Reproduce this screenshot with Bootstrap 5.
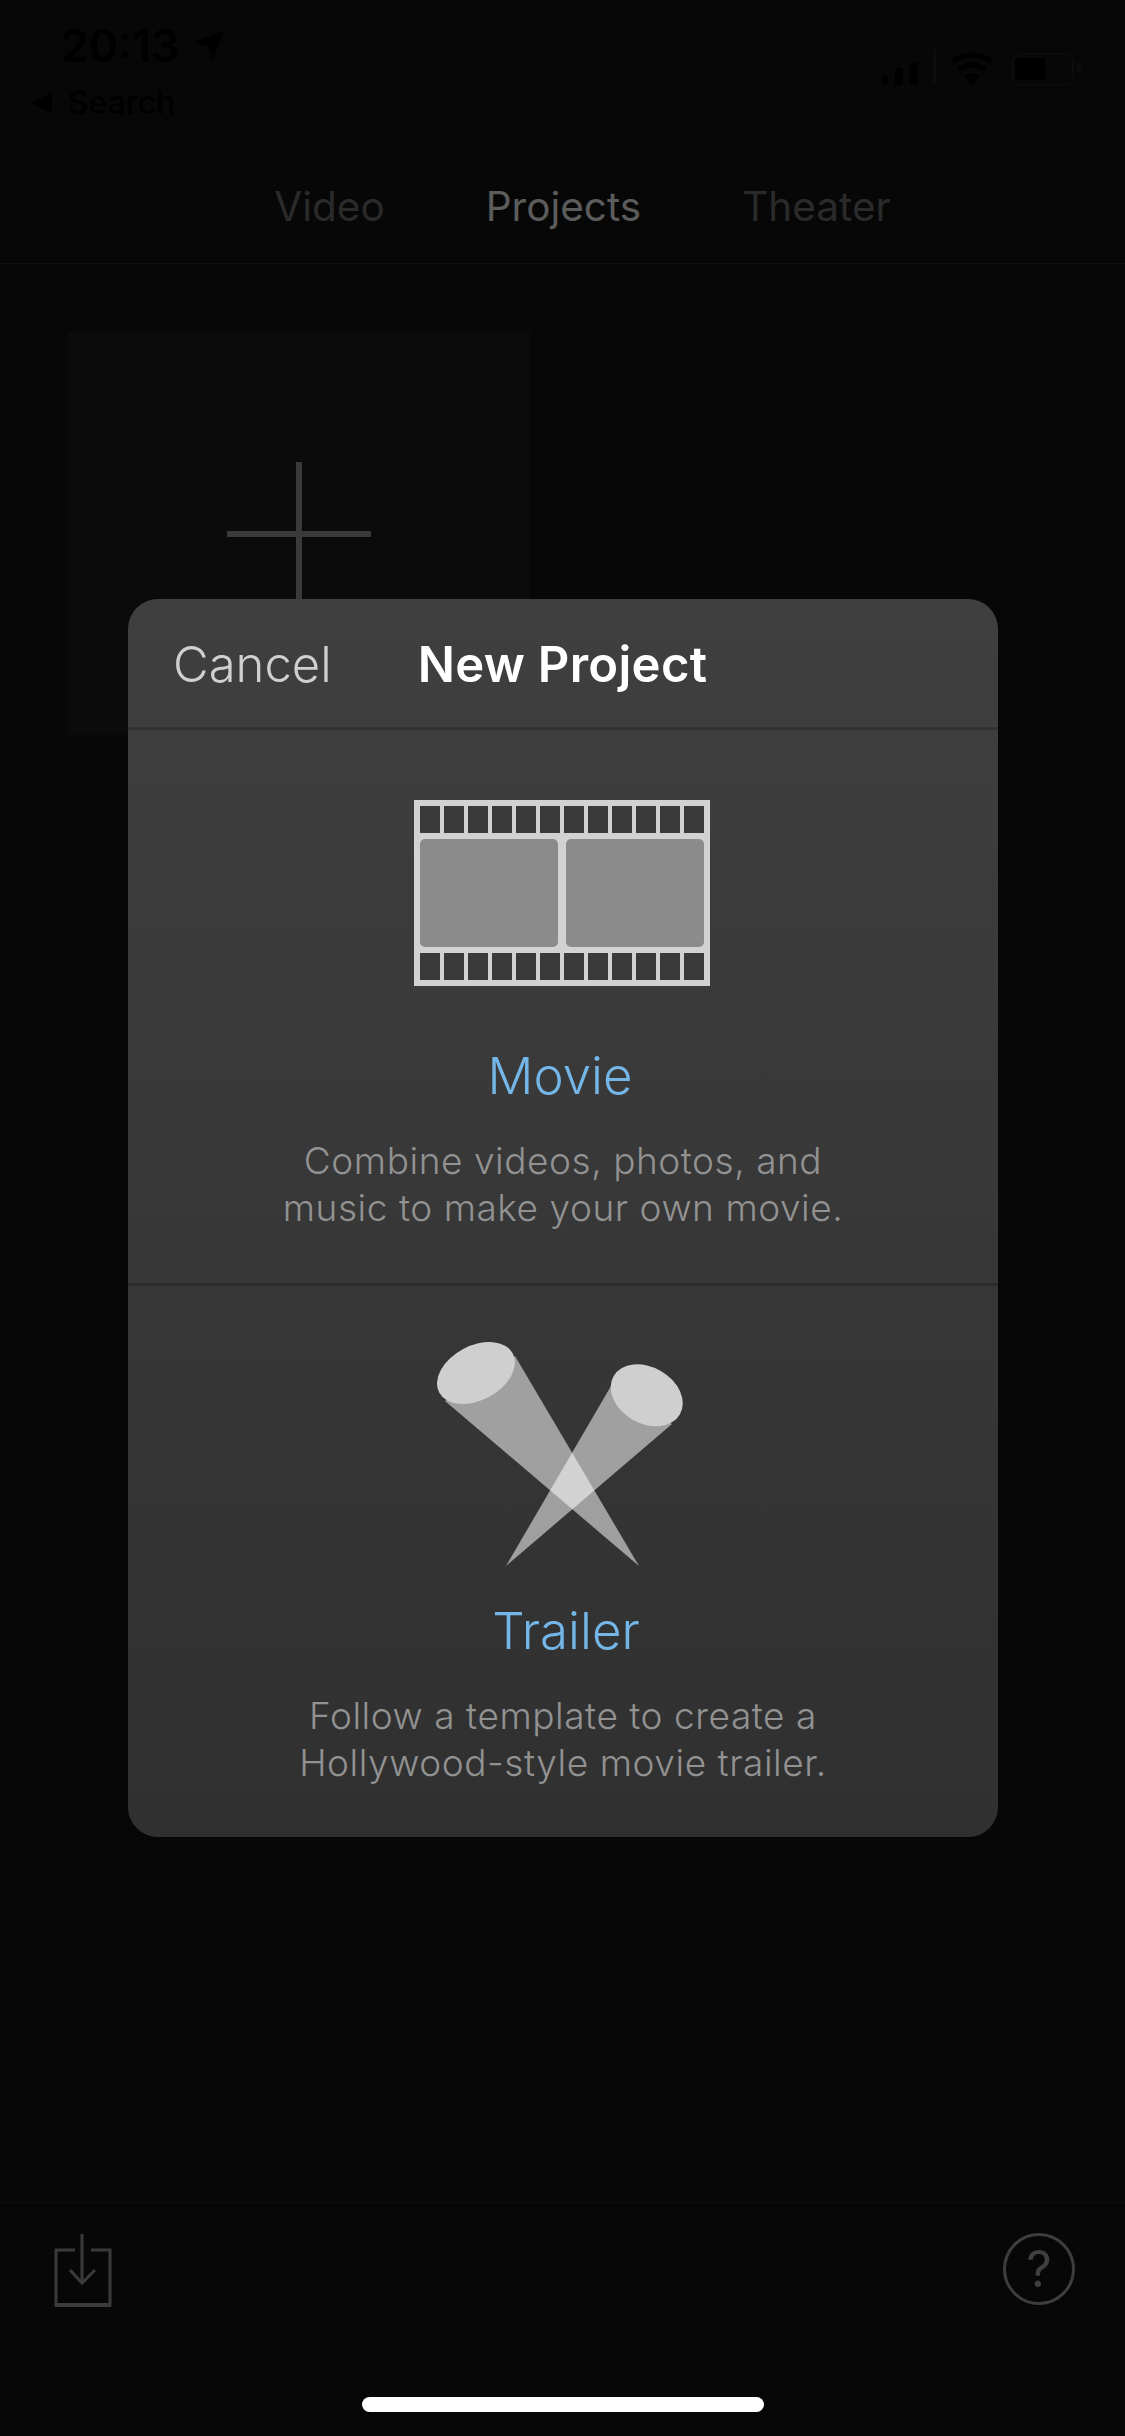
<!DOCTYPE html>
<html lang="en">
<head>
<meta charset="utf-8">
<title>New Project</title>
<link href="https://cdn.jsdelivr.net/npm/bootstrap@5.3.0/dist/css/bootstrap.min.css" rel="stylesheet">
<style>
html,body{margin:0;background:#070707}
body{width:1125px;height:2436px;overflow:hidden;font-family:Inter,"Liberation Sans",sans-serif;position:relative}
.app-screen{height:2436px}
.status-row{height:84px;padding:24px 43px 0 61px}
.clock{font-size:44.5px;font-weight:600;color:#000;line-height:1;margin-right:5px}
.status-icons{margin-top:22px}
.back-row{height:38px;padding-left:30px;color:#000;font-size:32px;font-weight:500;line-height:1}
.tabs-row{height:142px;padding:30px 0 0 40px;gap:101px;border-bottom:1px solid #0f0f0f;font-size:40.5px;line-height:1}
.tab-dim{color:#2a2a2a}
.tab-on{color:#5c5c5c}
.tile{width:462px;height:403px;margin:68px 0 0 68px;background:#0b0b0b}
.tool-row{height:195px;border-top:1px solid #0e0e0e;padding:30px 50px 0 53px}
.help-ring{width:72px;height:72px;border:3px solid #3d3d3d;border-radius:50%;color:#3f3f3f;font-size:50px;font-weight:400;line-height:1}
.home-bar{width:402px;height:15px;margin:0 auto 24px;background:#fff;border-radius:8px}
.dialog{position:absolute;left:128px;top:599px;width:870px;height:1238px;border-radius:30px;background:linear-gradient(#3f3f3f,#303030);overflow:hidden}
.dialog-head{height:131px;padding:3px 0 0 45px;gap:86px;border-bottom:3px solid #323232}
.cancel-txt{font-size:49px;font-weight:300;color:#d0d0d0;line-height:1}
.title-txt{font-size:49px;font-weight:600;color:#fff;line-height:1;letter-spacing:.3px}
.choice{height:555px}
.choice+.choice{border-top:3px solid #2b2b2b}
.film-pic{margin-top:70px;margin-left:-2px}
.cones-pic{margin-top:35px;margin-left:-6px}
.choice-name{font-size:51px;font-weight:300;color:#74b6e8;line-height:1}
.movie-name{margin-top:64px;margin-left:-6px}
.trailer-name{margin-top:24px;margin-left:6px}
.choice-desc{margin-top:36px;font-size:37px;font-weight:300;color:#929292;line-height:47px;text-align:center;letter-spacing:.55px}
</style>
</head>
<body>
<div class="app-screen d-flex flex-column">
  <div class="status-row d-flex align-items-start justify-content-between">
    <div class="d-flex align-items-center gap-2">
      <span class="clock">20:13</span>
      <svg width="34" height="32" viewBox="0 0 34 32"><polygon points="1,12 32,1 21,30 16,16" fill="#000"/></svg>
    </div>
    <svg class="status-icons" width="202" height="44" viewBox="0 0 202 44">
      <rect x="2" y="29" width="6" height="10" rx="2" fill="#000"/>
      <rect x="15" y="22" width="8" height="17" rx="2" fill="#000"/>
      <rect x="30" y="17" width="8" height="22" rx="2" fill="#000"/>
      <rect x="53" y="4" width="3" height="35" fill="#0c0c0c"/>
      <g fill="none" stroke="#000" stroke-width="5">
        <path d="M72.7 16A30 30 0 0 1 111.3 16"/>
        <path d="M79.1 23.7A20 20 0 0 1 104.9 23.7"/>
      </g>
      <polygon points="92,39 84,30 92,27 100,30" fill="#000"/>
      <rect x="133" y="8" width="60" height="31" rx="8" fill="none" stroke="#0c0c0c" stroke-width="2"/>
      <rect x="135" y="12" width="30" height="22" rx="3" fill="#000"/>
      <rect x="197" y="17" width="5" height="9" fill="#0c0c0c"/>
    </svg>
  </div>
  <div class="back-row d-flex align-items-center gap-3">
    <svg width="22" height="20" viewBox="0 0 22 20"><polygon points="0,10 22,0 22,20" fill="#000"/></svg>
    <span>Search</span>
  </div>
  <div class="tabs-row d-flex align-items-center justify-content-center">
    <span class="tab-dim">Video</span>
    <span class="tab-on">Projects</span>
    <span class="tab-dim">Theater</span>
  </div>
  <div class="tile d-flex align-items-center justify-content-center">
    <svg width="144" height="144" viewBox="0 0 144 144"><path d="M72 0V144M0 72H144" stroke="#3a3a3a" stroke-width="6"/></svg>
  </div>
  <div class="flex-grow-1"></div>
  <div class="tool-row d-flex justify-content-between align-items-start">
    <svg width="60" height="76" viewBox="0 0 60 76">
      <g fill="none" stroke="#3a3a3a" stroke-width="3">
        <path d="M22 17H3V72H57V17H38"/>
        <path d="M29 1V50M17 37L29 50L42 37"/>
      </g>
      <path d="M2 72H58" stroke="#3a3a3a" stroke-width="4"/>
    </svg>
    <div class="help-ring d-flex align-items-center justify-content-center">?</div>
  </div>
  <div class="home-bar"></div>
</div>

<div class="dialog d-flex flex-column">
  <div class="dialog-head d-flex align-items-center">
    <span class="cancel-txt">Cancel</span>
    <span class="title-txt">New Project</span>
  </div>
  <div class="choice d-flex flex-column align-items-center">
    <svg class="film-pic d-block" width="296" height="186" viewBox="0 0 296 186">
      <rect width="296" height="186" fill="#d2d2d2"/>
      <g fill="#3a3a3a">
        <rect x="6" y="6" width="20" height="27"/><rect x="30" y="6" width="20" height="27"/><rect x="54" y="6" width="20" height="27"/><rect x="78" y="6" width="20" height="27"/><rect x="102" y="6" width="20" height="27"/><rect x="126" y="6" width="20" height="27"/><rect x="150" y="6" width="20" height="27"/><rect x="174" y="6" width="20" height="27"/><rect x="198" y="6" width="20" height="27"/><rect x="222" y="6" width="20" height="27"/><rect x="246" y="6" width="20" height="27"/><rect x="270" y="6" width="20" height="27"/>
        <rect x="6" y="153" width="20" height="27"/><rect x="30" y="153" width="20" height="27"/><rect x="54" y="153" width="20" height="27"/><rect x="78" y="153" width="20" height="27"/><rect x="102" y="153" width="20" height="27"/><rect x="126" y="153" width="20" height="27"/><rect x="150" y="153" width="20" height="27"/><rect x="174" y="153" width="20" height="27"/><rect x="198" y="153" width="20" height="27"/><rect x="222" y="153" width="20" height="27"/><rect x="246" y="153" width="20" height="27"/><rect x="270" y="153" width="20" height="27"/>
      </g>
      <rect x="6" y="39" width="138" height="108" rx="5" fill="#8b8b8b"/>
      <rect x="152" y="39" width="138" height="108" rx="5" fill="#8b8b8b"/>
    </svg>
    <div class="choice-name movie-name">Movie</div>
    <p class="choice-desc mb-0">Combine videos, photos, and<br>music to make your own movie.</p>
  </div>
  <div class="choice d-flex flex-column align-items-center">
    <svg class="cones-pic d-block" width="320" height="260" viewBox="0 0 320 260">
      <polygon points="115,35 45,80 239,245" fill="#fff" fill-opacity=".53"/>
      <polygon points="211,65 272,103 106,245" fill="#fff" fill-opacity=".53"/>
      <ellipse cx="76" cy="52" rx="41.7" ry="27.2" transform="rotate(-28 76 52)" fill="#cfcfcf"/>
      <ellipse cx="246.7" cy="74.3" rx="38.3" ry="28.2" transform="rotate(30 246.7 74.3)" fill="#cfcfcf"/>
    </svg>
    <div class="choice-name trailer-name">Trailer</div>
    <p class="choice-desc mb-0">Follow a template to create a<br>Hollywood-style movie trailer.</p>
  </div>
</div>
<script src="https://cdn.jsdelivr.net/npm/bootstrap@5.3.0/dist/js/bootstrap.bundle.min.js"></script>
</body>
</html>
